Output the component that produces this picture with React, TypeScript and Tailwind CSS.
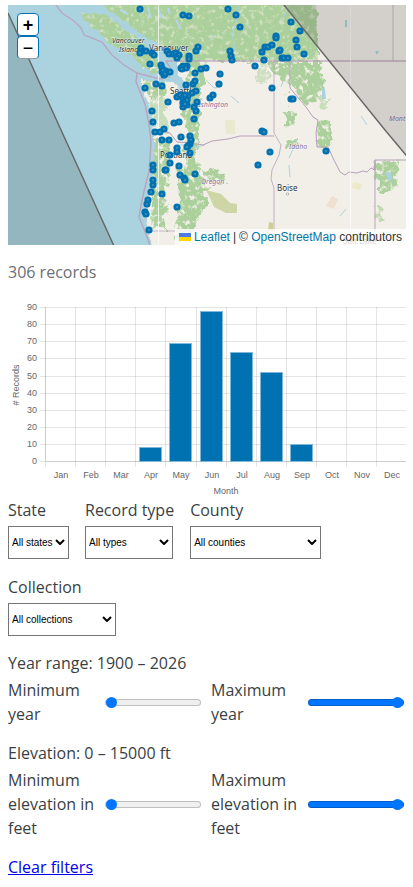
import { useState } from "react";
import type { CSSProperties } from "react";

interface MonthCount {
  month: string;
  records: number;
}

interface RangeFieldProps {
  id: string;
  label: string;
  min: number;
  max: number;
  value: number;
  onChange: (value: number) => void;
}

interface SelectFieldProps {
  id: string;
  label: string;
  allLabel: string;
  options: string[];
  className: string;
}

const monthCounts: MonthCount[] = [
  { month: "Jan", records: 0 },
  { month: "Feb", records: 0 },
  { month: "Mar", records: 0 },
  { month: "Apr", records: 8 },
  { month: "May", records: 69 },
  { month: "Jun", records: 88 },
  { month: "Jul", records: 64 },
  { month: "Aug", records: 52 },
  { month: "Sep", records: 10 },
  { month: "Oct", records: 0 },
  { month: "Nov", records: 0 },
  { month: "Dec", records: 0 },
];

// record locations on the map
const points: [number, number][] = [
  [140, 9], [183, 15], [189, 16], [228, 9], [236, 15], [240, 27],
  [141, 48], [143, 51], [146, 51], [140, 53], [152, 53], [154, 55],
  [167, 51], [169, 54], [173, 54], [176, 53], [179, 55], [177, 58],
  [198, 47], [196, 51], [189, 56], [189, 59], [150, 64],
  [161, 65], [162, 68], [162, 72], [164, 75], [166, 71], [170, 72], [163, 70], [165, 74],
  [181, 68], [183, 66], [187, 66], [182, 69], [186, 68],
  [201, 69], [206, 68], [195, 73], [230, 51], [231, 56], [232, 60],
  [255, 66], [262, 52], [264, 60], [265, 47], [268, 47],
  [220, 74], [219, 84], [145, 88], [156, 84], [162, 86],
  [186, 85], [193, 84], [195, 81], [196, 91],
  [177, 97], [180, 95], [183, 98], [183, 103], [185, 101], [187, 105], [183, 107],
  [188, 96], [192, 93], [187, 100], [185, 95], [185, 104],
  [197, 102], [194, 107], [196, 111], [194, 119], [210, 98], [213, 95],
  [168, 102], [152, 111], [153, 122], [174, 123], [179, 122], [164, 129],
  [291, 22], [300, 31], [296, 40], [297, 47], [304, 54], [276, 36], [276, 38],
  [272, 45], [279, 51], [280, 50], [282, 58], [284, 58], [288, 58],
  [272, 88], [291, 99], [293, 99],
  [155, 132], [160, 132], [162, 140], [169, 140], [181, 137], [190, 136],
  [191, 140], [190, 144], [188, 146], [187, 147], [190, 153], [177, 148], [177, 152],
  [170, 155], [170, 163], [179, 166], [165, 170], [166, 170], [180, 175],
  [184, 178], [185, 180], [195, 174], [153, 165], [153, 170], [153, 180], [153, 185],
  [151, 192], [162, 194], [177, 207], [148, 200], [147, 204], [145, 212], [146, 214],
  [149, 230], [262, 131], [264, 132], [270, 152], [258, 165], [326, 151],
];

const sans = "font-['Liberation_Sans',sans-serif]";
const links = "text-[#0078a8]";

const RecordMap = () => {
  return (
    <div className="relative h-60 w-full overflow-hidden bg-[#f2efe9]">
      <svg
        viewBox="8 5 398 240"
        preserveAspectRatio="xMidYMid slice"
        className="block h-full w-full"
        role="img"
        aria-label="Map of records"
      >
        <defs>
          <filter id="forest" x="0" y="0" width="100%" height="100%" colorInterpolationFilters="sRGB">
            <feTurbulence type="fractalNoise" baseFrequency="0.11" numOctaves={3} seed={4} result="edge" />
            <feDisplacementMap in="SourceGraphic" in2="edge" scale={16} xChannelSelector="R" yChannelSelector="G" result="shape" />
            <feTurbulence type="fractalNoise" baseFrequency="0.2" numOctaves={4} seed={9} />
            <feColorMatrix values="0 0 0 0 0  0 0 0 0 0  0 0 0 0 0  0 0 0 5 -2.7" result="holes" />
            <feComposite in="shape" in2="holes" operator="out" />
          </filter>
          <filter id="shore" x="-5%" y="-5%" width="110%" height="110%" colorInterpolationFilters="sRGB">
            <feTurbulence type="fractalNoise" baseFrequency="0.15" numOctaves={2} seed={2} />
            <feDisplacementMap in="SourceGraphic" scale={5} xChannelSelector="R" yChannelSelector="G" />
          </filter>
        </defs>

        {/* land */}
        <rect x="0" y="0" width="414" height="250" fill="#f2efe9" />
        <path d="M75 0H316L318 60H172L160 70L142 60L80 20Z" fill="#cfdfbf" />
        <g filter="url(#forest)" fill="#acd09b">
          <rect x="8" y="5" width="398" height="240" fill="none" />
          <path d="M70 0H314L319 61H196L175 62L164 82L140 66L90 34Z" />
          <path d="M184 60H206L203 84L198 110L199 150L200 172L208 188L206 206L197 220L190 238L176 238L179 190L184 150L183 110L188 84Z" />
          <path d="M143 78L166 80L168 94L160 100L147 96Z" />
          <path d="M150 98H167V130H153Z" opacity="0.6" />
          <path d="M155 138H168L170 160L166 190L165 228L149 230L151 190Z" />
          <path d="M268 62H289V84L284 82L276 78Z" />
          <path d="M290 62H322L325 82L319 100L306 102L298 97L291 90Z" />
          <path d="M285 112L295 110L294 125L284 124Z" />
          <path d="M318 121L328 122L333 136L328 146L316 148Z" />
          <path d="M290 139L299 138L298 145L288 146Z" />
          <path d="M204 170L222 172L226 182L208 180Z" />
          <path d="M376 162H398L394 190L378 192Z" />
          <path d="M376 204L383 206L382 222L377 220Z" opacity="0.7" />
          <path d="M318 96L325 96L329 108L320 108Z" opacity="0.6" />
          <path d="M258 62H268L266 86L258 80Z" opacity="0.5" />
          <path d="M176 226L188 224L186 244L176 240Z" opacity="0.6" />
        </g>
        <path d="M206 190L221 194L230 203L237 204V213H226L214 207L210 198Z" fill="#cdd6a4" />
        <path d="M225 120H235V134H226Z" fill="#dfe6bd" opacity="0.6" />
        <path d="M269 222L273 223V231H268Z" fill="#cfcf93" />
        <path d="M353 182L362 184L360 190L352 188Z" fill="#eee9c6" />
        <path d="M332 196L338 199L334 209L326 206Z" fill="#f0e0cf" />

        {/* ocean, strait of Georgia and Puget Sound */}
        <g fill="#aad3df" filter="url(#shore)">
          <path d="M0 0H62L80 10L84 20L91 27L98 31L108 42L120 49L132 56L142 66L152 73L161 77L166 82L152 82L141 79L142 86L147 100L151 112L154 130L154 152L153 172L151 190L147 206L146 216L149 228L151 252H0Z" />
          <path d="M62 0H98L108 10L122 19L134 29L146 37L158 43L164 48L172 57L177 63L178 74L186 84L187 98L182 104L178 100L180 88L174 82L165 82L160 70L158 60L148 48L136 38L122 27L106 14L80 13Z" />
        </g>
        <g fill="none" stroke="#aad3df" strokeWidth="1">
          <path d="M138 6l6 7M148 8l3 10M158 9l4 9M168 8l2 6M120 10l8 4M176 20l5 9" strokeWidth="2" stroke="#b3d5ef" />
          <path d="M239 5l-3 18-4 12 3 12-4 14M288 5l-5 14M214 34l-5 8" />
          <path d="M284 79l-3 8M321 84l3 12M297 140l-8 18M289 165l1 12M340 216l6-7M361 116l6 9" />
          <path d="M178 145l10 0 8 2 9-2M231 96l8 7M206 80l8 8 7-1" />
        </g>
        <path d="M385 172h5l3 7-4 2zM345 20h2v7h-2zM375 51h4l-2 4zM322 89h3l1 10h-4z" fill="#aad3df" />

        {/* borders */}
        <g fill="none" stroke="#b99fb9" strokeWidth="1">
          <path d="M52 0L62 13L74 21L81 28L84 35L102 42L112 55L124 65L137 73L160 79L169 77L171 69L166 61H172H406" strokeWidth="1.4" opacity="0.8" />
          <path d="M137 73L136 82L140 92L145 104L149 124L151 142L149 172L145 187L141 205L139 217L144 229L150 245" strokeWidth="1.4" opacity="0.9" />
          <path d="M158 130L170 133L177 142L190 143L203 145L212 141L220 140L228 139L240 136H274" />
          <path d="M274 61V133L281 145L279 155L272 170L271 179L274 188V245" opacity="0.8" />
          <path d="M290 61V88L300 100L306 107L313 117L318 120L316 133L317 147L328 147L333 158L337 166L340 172L345 175L349 172L357 173L363 171L367 172L371 168L375 170V160H406M375 160V245" />
          <path d="M150 231H274M393 5V61" opacity="0.7" />
        </g>
        <path d="M158.5 5V245M350.5 5V245" stroke="#fff" opacity="0.7" />

        {/* place names */}
        <g className="font-['Noto_Sans',sans-serif]" fontSize="8" fill="#333" stroke="#fff" strokeOpacity="0.6" strokeWidth="1" paintOrder="stroke">
          <g fontStyle="italic" fontSize="7">
            <text x="112" y="43">Vancouver</text>
            <text x="119" y="52">Island</text>
          </g>
          <text x="149" y="51">Vancouver</text>
          <text x="170" y="94">Seattle</text>
          <text x="160" y="158">Portland</text>
          <text x="277" y="191">Boise</text>
          <text x="343" y="244">Salt Lake</text>
          <g fontStyle="italic" fontSize="7" fill="#8d6f98">
            <text x="191" y="107">Washington</text>
            <text x="201" y="184">Oregon</text>
            <text x="289" y="149">Idaho</text>
            <text x="389" y="121">Mont</text>
          </g>
        </g>
        <circle cx="287.500" cy="194" r="1.200" fill="#fff" stroke="#999" strokeWidth="0.700" />

        {/* area outside the covered region */}
        <path d="M0 0L8 13L61 130L114 246H0Z" fill="#333" fillOpacity="0.18" />
        <path d="M279 0L284 5L385 130L410 160V0Z" fill="#333" fillOpacity="0.16" />
        <path d="M8 13L61 130L114 246M280 0L284 5L385 130L410 160" fill="none" stroke="#666" strokeWidth="1.400" />

        <g fill="#4a90b4" stroke="#0072b2" strokeWidth="2.600">
          {points.map(([x, y], i) => (
            <circle key={i} cx={x} cy={y} r="2.300" />
          ))}
        </g>
      </svg>

      <div className={`absolute left-[9px] top-2 flex flex-col text-lg font-bold leading-none text-black ${sans}`}>
        <button type="button" aria-label="Zoom in" className="flex h-[23px] w-[22px] items-center justify-center rounded-sm border border-[#0072b2] bg-white">
          +
        </button>
        <button type="button" aria-label="Zoom out" className="flex h-[23px] w-[22px] items-center justify-center rounded-sm border border-[#0072b2] border-b-[#999] bg-white">
          <span className="font-normal">−</span>
        </button>
      </div>

      <div className={`absolute bottom-0 right-0 flex items-center gap-[3px] bg-white/80 px-1 text-xs text-[#333] ${sans}`}>
        <a href="#leaflet" className={`flex items-center gap-[3px] ${links}`}>
          <svg viewBox="0 0 12 8" className="h-2 w-3" aria-hidden="true">
            <path fill="#4C7BE1" d="M0 0h12v4H0z" />
            <path fill="#FFD500" d="M0 4h12v4H0z" />
          </svg>
          Leaflet
        </a>
        <span>|</span>
        <span>
          © <a href="#openstreetmap" className={links}>OpenStreetMap</a> contributors
        </span>
      </div>
    </div>
  );
};

const MonthChart = () => {
  const left = 38;
  const bottom = 164;
  const step = 30;
  const unit = 1.71;

  return (
    <svg viewBox="0 0 398 200" className={`block w-full ${sans}`} role="img" aria-label="Records by month">
      <g stroke="#000" strokeOpacity="0.1">
        {Array.from({ length: 10 }, (_, i) => {
          const y = Math.round(bottom - i * 10 * unit) + 0.5;
          return <line key={i} x1={left - 6} x2="398" y1={y} y2={y} />;
        })}
        {monthCounts.map(({ month }, i) => {
          const x = left - 0.5 + Math.round(i * 30.1);
          return <line key={month} x1={x} x2={x} y1="10" y2="170" />;
        })}
        <path d="M37.5 10V164M38 164.5H398" />
      </g>
      <g fontSize="9" fill="#666">
        {Array.from({ length: 10 }, (_, i) => (
          <text key={i} x="29" y={Math.round(bottom - i * 10 * unit) + 3} textAnchor="end">
            {i * 10}
          </text>
        ))}
        {monthCounts.map(({ month }, i) => (
          <text key={month} x={left + 15 + Math.round(i * 30.1)} y="181" textAnchor="middle">
            {month}
          </text>
        ))}
        <text x="218" y="197" textAnchor="middle">Month</text>
        <text transform="translate(11 88) rotate(-90)" textAnchor="middle"># Records</text>
      </g>
      <g fill="#0072b2" stroke="#7fb8d8" strokeWidth="1">
        {monthCounts
          .map((item, i) => ({ ...item, i }))
          .filter(({ records }) => records > 0)
          .map(({ month, records, i }) => (
            <rect
              key={month}
              x={left + 3.5 + Math.round(i * 30.1)}
              y={bottom + 0.5 - Math.round(records * unit)}
              width={step - 8}
              height={Math.round(records * unit)}
            />
          ))}
      </g>
    </svg>
  );
};

const SelectField = ({ id, label, allLabel, options, className }: SelectFieldProps) => (
  <div className="flex flex-col gap-1">
    <label htmlFor={id}>{label}</label>
    <div className={`relative ${className}`}>
      <select
        id={id}
        className={`block h-[33px] w-full appearance-none border border-[#767676] bg-white pl-[3px] text-[10px] text-black ${sans}`}
      >
        <option>{allLabel}</option>
        {options.map((option) => (
          <option key={option}>{option}</option>
        ))}
      </select>
      <svg
        viewBox="0 0 10 6"
        className="pointer-events-none absolute right-1 top-[13px] h-1.5 w-2.5"
        fill="none"
        stroke="#000"
        strokeWidth="2"
        aria-hidden="true"
      >
        <path d="M1 1l4 4 4-4" />
      </svg>
    </div>
  </div>
);

const RangeField = ({ id, label, min, max, value, onChange }: RangeFieldProps) => {
  const fill = ((value - min) / (max - min)) * 100;

  return (
    <div className="flex items-center justify-between pr-0.5">
      <label htmlFor={id} className="min-w-0 flex-1">
        {label}
      </label>
      <input
        id={id}
        type="range"
        min={min}
        max={max}
        value={value}
        onChange={(e) => onChange(Number(e.target.value))}
        style={{ "--fill": `${fill}%` } as CSSProperties}
        className="h-4 w-24 shrink-0 appearance-none bg-transparent [&::-webkit-slider-runnable-track]:h-[7px] [&::-webkit-slider-runnable-track]:rounded-full [&::-webkit-slider-runnable-track]:border [&::-webkit-slider-runnable-track]:border-black/20 [&::-webkit-slider-runnable-track]:bg-[linear-gradient(to_right,#0075ff_var(--fill),#efefef_var(--fill))] [&::-webkit-slider-thumb]:-mt-[3px] [&::-webkit-slider-thumb]:size-[11px] [&::-webkit-slider-thumb]:appearance-none [&::-webkit-slider-thumb]:rounded-full [&::-webkit-slider-thumb]:bg-[#0075ff]"
      />
    </div>
  );
};

const App = () => {
  const [years, setYears] = useState({ min: 1900, max: 2026 });
  const [elevation, setElevation] = useState({ min: 0, max: 15000 });

  const clearFilters = (e: React.MouseEvent) => {
    e.preventDefault();
    setYears({ min: 1900, max: 2026 });
    setElevation({ min: 0, max: 15000 });
  };

  return (
    <main className="min-h-screen bg-white pb-2 pl-2 pr-[7px] pt-[5px] font-['Open_Sans',sans-serif] text-base leading-6 text-[#3a3f44]">
      <RecordMap />
      <p className="mt-[15px] text-[#6b6f76]">306 records</p>

      <div className="mt-[13px]">
        <MonthChart />
      </div>

      <form>
        <div className="mt-px flex flex-wrap gap-4">
          <SelectField id="state" label="State" allLabel="All states" options={["ID", "OR", "WA"]} className="w-[61px]" />
          <SelectField id="type" label="Record type" allLabel="All types" options={["Specimen", "Photo"]} className="w-[88px]" />
          <SelectField id="county" label="County" allLabel="All counties" options={["King", "Lane"]} className="w-[131px]" />
          <SelectField id="collection" label="Collection" allLabel="All collections" options={["Museum"]} className="w-[108px]" />
        </div>

        <fieldset className="mt-[15px]">
          <legend>
            Year range: {years.min} – {years.max}
          </legend>
          <div className="mt-[3px] grid grid-cols-2 gap-2">
            <RangeField id="min-year" label="Minimum year" min={1900} max={2026} value={years.min} onChange={(min) => setYears({ ...years, min })} />
            <RangeField id="max-year" label="Maximum year" min={1900} max={2026} value={years.max} onChange={(max) => setYears({ ...years, max })} />
          </div>
        </fieldset>

        <fieldset className="mt-[15px]">
          <legend>
            Elevation: {elevation.min} – {elevation.max} ft
          </legend>
          <div className="mt-[3px] grid grid-cols-2 gap-2">
            <RangeField id="min-elevation" label="Minimum elevation in feet" min={0} max={15000} value={elevation.min} onChange={(min) => setElevation({ ...elevation, min })} />
            <RangeField id="max-elevation" label="Maximum elevation in feet" min={0} max={15000} value={elevation.max} onChange={(max) => setElevation({ ...elevation, max })} />
          </div>
        </fieldset>

        <a href="#clear" onClick={clearFilters} className="mt-[15px] inline-block text-[#0000ee] underline">
          Clear filters
        </a>
      </form>
    </main>
  );
};

export default App;
